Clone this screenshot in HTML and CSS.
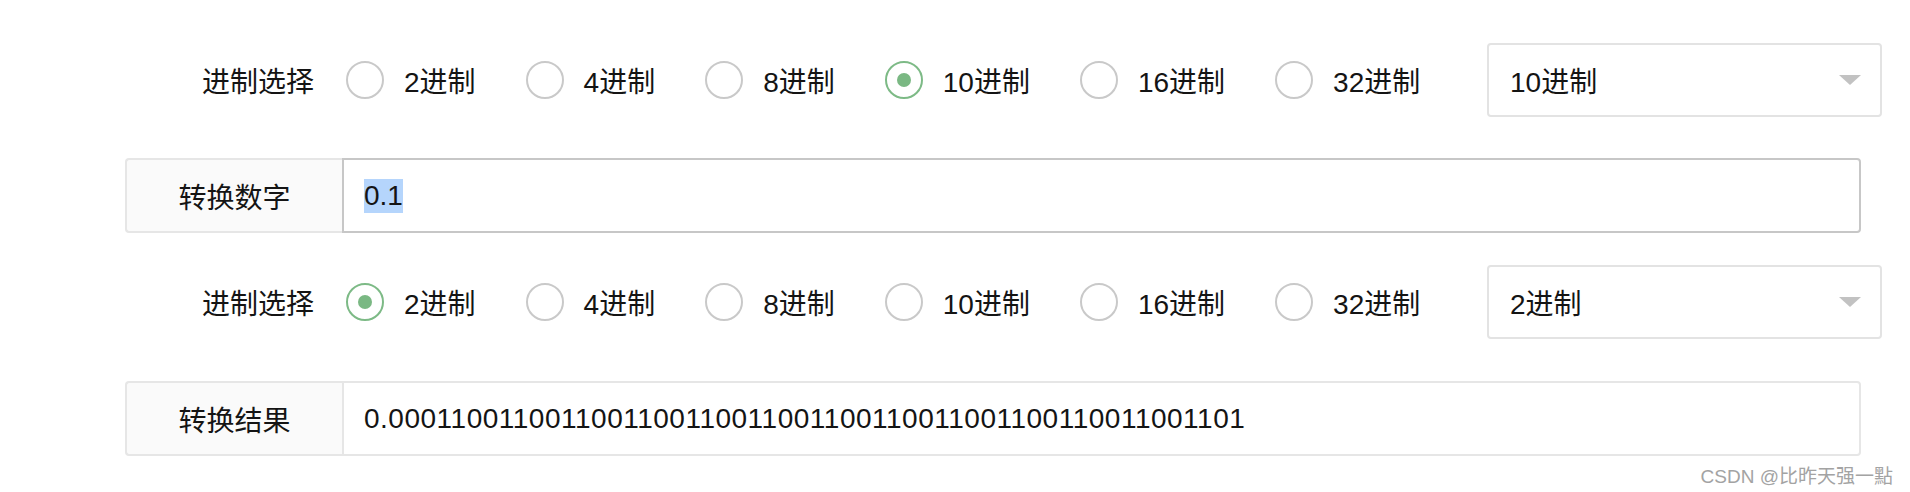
FILE: index.html
```html
<!DOCTYPE html>
<html lang="zh-CN">
<head>
<meta charset="utf-8">
<title>进制转换</title>
<link rel="stylesheet" href="styles.css">
</head>
<body>
<div class="page">
  <div class="radio-row row-first">
    <span class="row-label">进制选择</span>
    <div class="radio-group">
      <label class="radio"><span class="radio-circle"></span><span class="radio-text">2进制</span></label>
      <label class="radio"><span class="radio-circle"></span><span class="radio-text">4进制</span></label>
      <label class="radio"><span class="radio-circle"></span><span class="radio-text">8进制</span></label>
      <label class="radio checked"><span class="radio-circle"></span><span class="radio-text">10进制</span></label>
      <label class="radio"><span class="radio-circle"></span><span class="radio-text">16进制</span></label>
      <label class="radio"><span class="radio-circle"></span><span class="radio-text">32进制</span></label>
    </div>
    <div class="select">
      <span class="select-value">10进制</span>
      <span class="select-arrow"></span>
    </div>
  </div>

  <div class="field-row row-input">
    <div class="field-label">转换数字</div>
    <div class="field-input focused"><span class="selected-text">0.1</span></div>
  </div>

  <div class="radio-row row-third">
    <span class="row-label">进制选择</span>
    <div class="radio-group">
      <label class="radio checked"><span class="radio-circle"></span><span class="radio-text">2进制</span></label>
      <label class="radio"><span class="radio-circle"></span><span class="radio-text">4进制</span></label>
      <label class="radio"><span class="radio-circle"></span><span class="radio-text">8进制</span></label>
      <label class="radio"><span class="radio-circle"></span><span class="radio-text">10进制</span></label>
      <label class="radio"><span class="radio-circle"></span><span class="radio-text">16进制</span></label>
      <label class="radio"><span class="radio-circle"></span><span class="radio-text">32进制</span></label>
    </div>
    <div class="select">
      <span class="select-value">2进制</span>
      <span class="select-arrow"></span>
    </div>
  </div>

  <div class="field-row row-result">
    <div class="field-label">转换结果</div>
    <div class="field-input"><span class="result-value">0.0001100110011001100110011001100110011001100110011001101</span></div>
  </div>

  <div class="watermark">CSDN @比昨天强一點</div>
</div>
</body>
</html>
```

FILE: styles.css
```css
html, body {
  margin: 0;
  padding: 0;
  background: #ffffff;
}

body {
  font-family: "Liberation Sans", "Noto Sans CJK SC", sans-serif;
  font-size: 28px;
  color: #141414;
}

.page {
  position: relative;
  width: 1910px;
  height: 492px;
  padding-top: 43px;
  box-sizing: border-box;
}

.radio-row {
  display: flex;
  align-items: center;
  height: 74px;
  padding-left: 202px;
  padding-right: 28px;
}

.row-label {
  margin-right: 32px;
  white-space: nowrap;
}

.radio-group {
  display: flex;
  align-items: center;
}

.radio {
  display: flex;
  align-items: center;
  margin-right: 50px;
}

.radio-circle {
  width: 38px;
  height: 38px;
  box-sizing: border-box;
  border: 2.5px solid #c9c9c9;
  border-radius: 50%;
  margin-right: 20px;
  display: flex;
  align-items: center;
  justify-content: center;
}

.radio.checked .radio-circle {
  border-color: #7dba86;
}

.radio.checked .radio-circle::after {
  content: "";
  width: 14px;
  height: 14px;
  border-radius: 50%;
  background: #7ab883;
}

.radio-text {
  white-space: nowrap;
}

.select {
  margin-left: auto;
  width: 395px;
  height: 74px;
  box-sizing: border-box;
  border: 2px solid #e3e3e3;
  border-radius: 4px;
  display: flex;
  align-items: center;
  padding-left: 21px;
  padding-right: 19px;
}

.select-value {
  flex: 1;
}

.select-arrow {
  width: 0;
  height: 0;
  border-left: 11px solid transparent;
  border-right: 11px solid transparent;
  border-top: 10px solid #c2c2c2;
}

.field-row {
  display: flex;
  margin-left: 125px;
  width: 1736px;
  height: 75px;
}

.row-input {
  margin-top: 41px;
}

.row-third {
  margin-top: 32px;
}

.row-result {
  margin-top: 42px;
}

.field-label {
  width: 217px;
  box-sizing: border-box;
  background: #fafafa;
  border: 2px solid #e6e6e6;
  border-right: none;
  border-radius: 4px 0 0 4px;
  display: flex;
  align-items: center;
  justify-content: center;
}

.field-input {
  flex: 1;
  box-sizing: border-box;
  border: 2px solid #e6e6e6;
  border-radius: 0 4px 4px 0;
  display: flex;
  align-items: center;
  padding-left: 20px;
  white-space: nowrap;
}

.field-input.focused {
  border-color: #c7c7c7;
}

.selected-text {
  background: #b5d5fc;
  line-height: 34px;
}

.result-value {
  letter-spacing: 0.5px;
}

.watermark {
  position: absolute;
  right: 17px;
  top: 461px;
  font-size: 19px;
  color: #a3a3a3;
  white-space: nowrap;
}
```
